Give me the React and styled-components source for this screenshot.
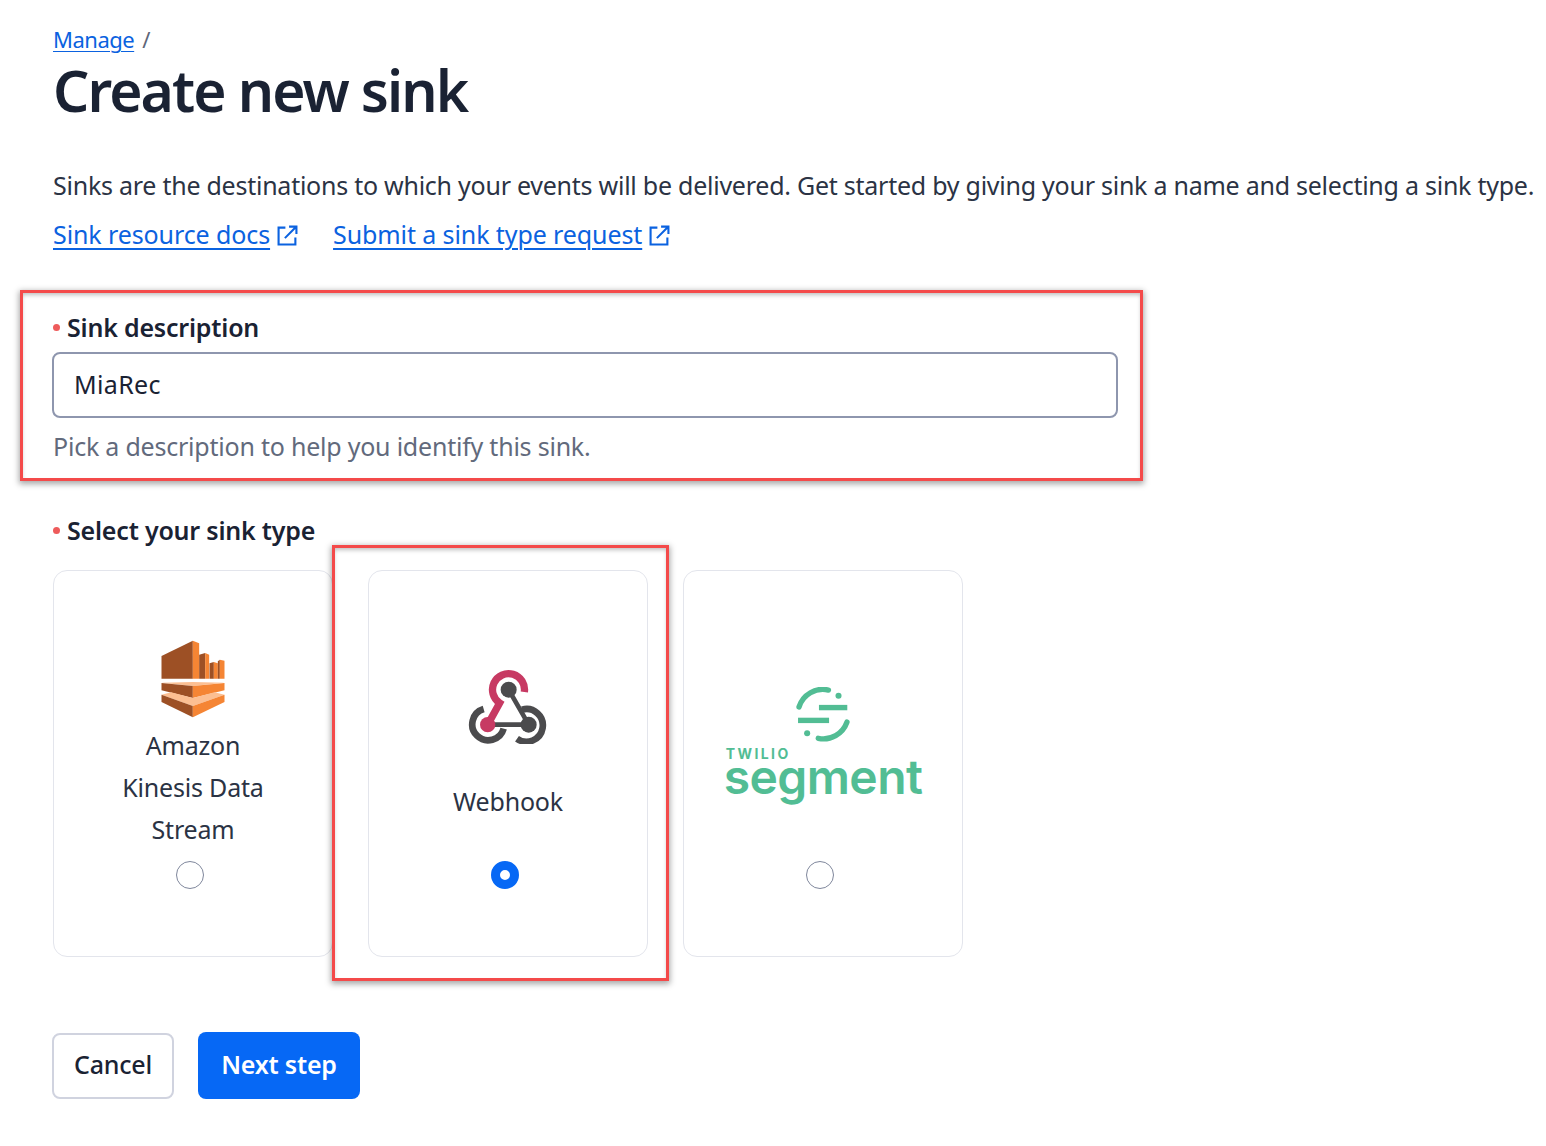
import React from "react";
import styled, { createGlobalStyle } from "styled-components";

const GlobalStyle = createGlobalStyle`
    html, body {
        margin: 0;
        padding: 0;
        background: #fff;
    }
    body {
        font-family: "Noto Sans", "Open Sans", sans-serif;
        color: #1b2333;
    }
`;

function ExternalIcon() {
    return (
        <LinkIcon viewBox="0 0 20 20" fill="none" stroke="#0b62e0" strokeWidth="2">
            <path d="M8 2.5H1.5v16h16V12" />
            <path d="M7.5 12.5 18 2M11.5 1.5h7v7" />
        </LinkIcon>
    );
}

function KinesisLogo() {
    return (
        <svg width="66" height="78" viewBox="92 60 191 234">
            <polygon points="93,108 187,62 187,176 93,176" fill="#9d5025" />
            <polygon points="187,62 206,70 206,176 187,176" fill="#f58534" />
            <polygon points="206,104 224,99 224,176 206,176" fill="#9d5025" />
            <polygon points="224,99 236,104 236,176 224,176" fill="#f58534" />
            <polygon points="237,130 250,126 250,176 237,176" fill="#9d5025" />
            <polygon points="250,126 262,130 262,176 250,176" fill="#f58534" />
            <polygon points="262,124 268,119 268,176 262,176" fill="#9d5025" />
            <polygon points="268,119 282,122 282,176 268,176" fill="#f58534" />
            <polygon points="93,188 187,186 282,188 187,198" fill="#fcbf92" />
            <polygon points="93,189 187,198 187,234 93,211" fill="#9d5025" />
            <polygon points="187,198 282,189 282,211 187,234" fill="#f58534" />
            <polygon points="93,224 122,217 187,234 252,217 282,224 187,258" fill="#fcbf92" />
            <polygon points="93,224 187,258 187,292 93,246" fill="#9d5025" />
            <polygon points="187,258 282,224 282,246 187,292" fill="#f58534" />
        </svg>
    );
}

function WebhookLogo() {
    return (
        <svg width="80" height="76" viewBox="53 40 240 228" fill="none" strokeLinecap="butt">
            <path d="M175 105 235 210H112" stroke="#4b4b4d" strokeWidth="14" />
            <path d="M222 112A48 48 0 1 0 148 145L112 210" stroke="#c73a63" strokeWidth="22" />
            <circle cx="112" cy="210" r="23" fill="#c73a63" />
            <circle cx="175" cy="105" r="24" fill="#4b4b4d" />
            <circle cx="235" cy="210" r="24" fill="#4b4b4d" />
            <path d="M100 163A48 48 0 1 0 160 222" stroke="#4b4b4d" strokeWidth="20" />
            <path d="M215 165A49 49 0 1 1 200 252" stroke="#4b4b4d" strokeWidth="20" />
        </svg>
    );
}

function SegmentMark() {
    return (
        <svg width="54" height="56" viewBox="244 36 160 166" fill="none" stroke="#52bd94" strokeWidth="16" strokeLinecap="round">
            <path d="M340 45A74 74 0 0 0 253 95" />
            <path d="M312 97H396" strokeLinecap="butt" />
            <path d="M250 135H342" strokeLinecap="butt" />
            <path d="M395 140A74 74 0 0 1 310 188" />
            <circle cx="370" cy="62" r="9" fill="#52bd94" stroke="none" />
            <circle cx="277" cy="173" r="9" fill="#52bd94" stroke="none" />
        </svg>
    );
}

function App() {
    return (
        <Page>
            <GlobalStyle />
            <Breadcrumb>
                <BreadcrumbLink href="#">Manage</BreadcrumbLink>
                <Slash>/</Slash>
            </Breadcrumb>
            <Title>Create new sink</Title>
            <Intro>
                Sinks are the destinations to which your events will be delivered. Get started by giving your sink a name and selecting a sink type.
            </Intro>
            <Links>
                <DocLink>
                    <a href="#">Sink resource docs</a>
                    <ExternalIcon />
                </DocLink>
                <DocLink>
                    <a href="#">Submit a sink type request</a>
                    <ExternalIcon />
                </DocLink>
            </Links>

            <Field>
                <Callout $inset="-20px -25px -17px -32px" />
                <Label>Sink description</Label>
                <Input defaultValue="MiaRec" />
                <Help>Pick a description to help you identify this sink.</Help>
            </Field>

            <TypeLabel>Select your sink type</TypeLabel>
            <Cards>
                <Card>
                    <Media>
                        <KinesisLogo />
                        <CardName>Amazon<br />Kinesis Data<br />Stream</CardName>
                    </Media>
                    <Radio />
                </Card>
                <Card>
                    <Callout $inset="-26px -22px -25px -37px" />
                    <Media>
                        <WebhookLogo />
                        <WebhookName>Webhook</WebhookName>
                    </Media>
                    <Radio $checked />
                </Card>
                <Card>
                    <Media>
                        <SegmentMark />
                        <Segment>
                            <Twilio>TWILIO</Twilio>
                            <SegmentWord>segment</SegmentWord>
                        </Segment>
                    </Media>
                    <Radio />
                </Card>
            </Cards>

            <Actions>
                <CancelButton>Cancel</CancelButton>
                <NextButton>Next step</NextButton>
            </Actions>
        </Page>
    );
}

export default App;

const Page = styled.div`
    width: 1546px;
    height: 1146px;
    box-sizing: border-box;
    padding: 26px 0 0 53px;
    overflow: hidden;
`;

const Breadcrumb = styled.div`
    display: flex;
    align-items: center;
    gap: 8px;
    height: 27px;
    line-height: 27px;
    font-size: 22px;
`;

const BreadcrumbLink = styled.a`
    color: #0b62e0;
    letter-spacing: -0.5px;
    text-decoration: underline;
    text-underline-offset: 3px;
    text-decoration-thickness: 1px;
`;

const Slash = styled.span`
    color: #5e6678;
`;

const Title = styled.h1`
    margin: 0;
    height: 74px;
    line-height: 74px;
    font-size: 57px;
    font-weight: 600;
    letter-spacing: -1.9px;
    color: #1a2233;
    white-space: nowrap;
`;

const Intro = styled.p`
    margin: 38px 0 0;
    line-height: 40px;
    font-size: 25px;
    letter-spacing: -0.25px;
    color: #2b3344;
    white-space: nowrap;
`;

const Links = styled.div`
    display: flex;
    gap: 35px;
    margin-top: 9px;
    height: 40px;
    align-items: center;
`;

const DocLink = styled.span`
    display: flex;
    align-items: center;
    gap: 7px;
    font-size: 25px;
    letter-spacing: -0.1px;

    a {
        color: #0b62e0;
        text-decoration: underline;
        text-underline-offset: 4px;
        text-decoration-thickness: 2px;
    }
`;

const LinkIcon = styled.svg`
    width: 21px;
    height: 21px;
    margin-top: 3px;
`;

const Field = styled.div`
    position: relative;
    margin-top: 56px;
    width: 1066px;
    margin-left: -1px;
`;

const Callout = styled.div`
    position: absolute;
    inset: ${(props) => props.$inset};
    border: 3px solid #f44a4a;
    box-shadow: 0 2px 6px 1px rgba(0, 0, 0, 0.35), inset 0 3px 4px -1px rgba(0, 0, 0, 0.25);
    pointer-events: none;
`;

const Label = styled.label`
    display: flex;
    align-items: center;
    gap: 7px;
    height: 34px;
    margin-left: 1px;
    font-size: 25px;
    font-weight: 600;
    letter-spacing: -0.2px;
    color: #1a2233;

    &:before {
        content: "";
        width: 7px;
        height: 7px;
        border-radius: 50%;
        background: #ee5b5b;
    }
`;

const Input = styled.input`
    display: block;
    box-sizing: border-box;
    width: 100%;
    height: 66px;
    margin-top: 8px;
    padding: 0 20px 3px;
    border: 2px solid #8e96ae;
    border-radius: 8px;
    outline: none;
    font-family: inherit;
    font-size: 25px;
    letter-spacing: 0.35px;
    color: #1a2233;
`;

const Help = styled.div`
    margin: 10px 0 0 1px;
    height: 36px;
    line-height: 36px;
    font-size: 25px;
    letter-spacing: -0.22px;
    color: #626a7c;
`;

const TypeLabel = styled(Label)`
    margin: 49px 0 0 0;
`;

const Cards = styled.div`
    display: flex;
    gap: 35px;
    margin-top: 23px;
`;

const Card = styled.div`
    position: relative;
    display: flex;
    flex-direction: column;
    align-items: center;
    box-sizing: border-box;
    width: 280px;
    height: 387px;
    border: 1px solid #e3e5ec;
    border-radius: 14px;
`;

const Media = styled.div`
    display: flex;
    flex-direction: column;
    align-items: center;
    justify-content: center;
    margin-top: 44px;
    height: 260px;
    width: 100%;
`;

const CardName = styled.div`
    margin-top: 6px;
    text-align: center;
    line-height: 42px;
    font-size: 25px;
    letter-spacing: -0.2px;
    color: #2b3344;
`;

const WebhookName = styled(CardName)`
    margin-top: 36px;
`;

const Segment = styled.div`
    display: flex;
    flex-direction: column;
    align-items: flex-start;
    margin-top: 4px;
`;

const Twilio = styled.div`
    font-family: Inter, sans-serif;
    font-size: 14px;
    font-weight: 700;
    line-height: 14px;
    letter-spacing: 2.4px;
    color: #52bd94;
    margin-left: 2px;
`;

const SegmentWord = styled.div`
    font-family: Inter, sans-serif;
    font-size: 48px;
    font-weight: 600;
    line-height: 32px;
    letter-spacing: -0.6px;
    color: #52bd94;
    margin-bottom: 10px;
`;

const Radio = styled.span`
    display: block;
    box-sizing: border-box;
    flex: none;
    width: 28px;
    height: 28px;
    margin-top: -14px;
    margin-right: 6px;
    border-radius: 50%;
    background: #fff;
    border: ${(props) => (props.$checked ? "9px solid #0668f5" : "1px solid #7f879c")};
`;

const Actions = styled.div`
    display: flex;
    gap: 24px;
    margin: 76px 0 0 -1px;
`;

const CancelButton = styled.button`
    box-sizing: border-box;
    width: 122px;
    height: 66px;
    padding: 0 0 4px;
    border: 2px solid #d0d3df;
    border-radius: 8px;
    background: #fff;
    font-family: inherit;
    font-size: 25px;
    font-weight: 500;
    letter-spacing: -0.2px;
    color: #1a2233;
`;

const NextButton = styled.button`
    box-sizing: border-box;
    width: 162px;
    height: 67px;
    margin-top: -1px;
    padding: 0 0 3px;
    border: none;
    border-radius: 8px;
    background: #0668f5;
    font-family: inherit;
    font-size: 25px;
    font-weight: 600;
    letter-spacing: -0.2px;
    color: #fff;
`;
